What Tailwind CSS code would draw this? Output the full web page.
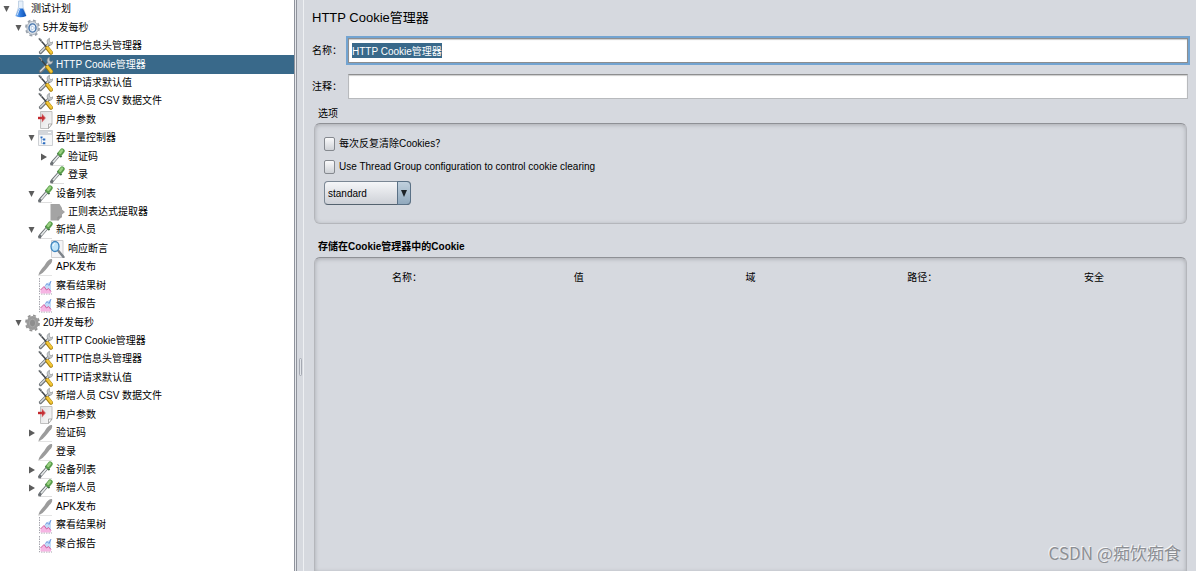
<!DOCTYPE html>
<html lang="zh-CN">
<head>
  <meta charset="UTF-8">
  <meta name="viewport" content="width=device-width, initial-scale=1.0">
  <title>HTTP Cookie管理器</title>
  <script src="https://cdn.jsdelivr.net/npm/@tailwindcss/browser@4"></script>
</head>
<body class="bg-white h-screen pr-px pb-px overflow-hidden text-black text-[10px] font-['Liberation_Sans','Noto_Sans_CJK_SC',sans-serif]">

  <!-- Icons -->
  <svg class="absolute w-0 h-0">
    <defs>
      <linearGradient id="glass" x1="0" y1="0" x2="1" y2="0">
        <stop offset="0" stop-color="#8fbcf0"/><stop offset=".45" stop-color="#2d7be0"/><stop offset="1" stop-color="#0d4eb0"/>
      </linearGradient>
      <linearGradient id="paper" x1="0" y1="0" x2="1" y2="1">
        <stop offset="0" stop-color="#dededf"/><stop offset="1" stop-color="#fbfbfb"/>
      </linearGradient>
    </defs>
    <symbol id="open" viewBox="0 0 12 18"><path d="M2.500 6h6L5.500 12z" fill="#5c5c5c"/></symbol>
    <symbol id="closed" viewBox="0 0 12 18"><path d="M3 5.500v7L9 9z" fill="#5c5c5c"/></symbol>
    <symbol id="flask" viewBox="0 0 15 18">
      <path d="M5.500 1v6L3 15.500h10L10 7V1z" fill="#e6f0fb" stroke="#b4c8de" stroke-width=".8"/>
      <path d="M6 8.500h4L13.300 16q-5.800 2.500-11 0z" fill="url(#glass)"/>
      <path d="m6.500 9-2.300 6" stroke="#cfe3fa" stroke-width="1"/>
    </symbol>
    <symbol id="gear" viewBox="0 0 15 18">
      <ellipse cx="7.500" cy="9" rx="6.500" ry="7.700" fill="none" stroke="#98a0aa" stroke-width="1.800" stroke-dasharray="3 2.600"/>
      <ellipse cx="7.500" cy="9" rx="5.600" ry="6.600" fill="#d9dfe6" stroke="#a8b0ba"/>
      <ellipse cx="7.500" cy="9" rx="3.500" ry="4.100" fill="#eef4fc" stroke="#4474ac" stroke-width="1.400"/>
      <path d="M6.300 6.800v4.400L9.800 9z" fill="#fff" stroke="#84a9d3" stroke-width=".5"/>
    </symbol>
    <symbol id="gear-off" viewBox="0 0 15 18">
      <ellipse cx="7.500" cy="9" rx="6.500" ry="7.700" fill="none" stroke="#949494" stroke-width="1.800" stroke-dasharray="3 2.600"/>
      <ellipse cx="7.500" cy="9" rx="6" ry="7" fill="#9b9b9b"/>
      <ellipse cx="7.500" cy="9" rx="3.200" ry="3.800" fill="#8e8e8e" stroke="#a9a9a9"/>
    </symbol>
    <symbol id="tools" viewBox="0 0 15 18">
      <path d="M11 7 2.500 15.500" stroke="#70757a" stroke-width="3.200" stroke-linecap="round"/>
      <path d="M11 6.700 2.600 15" stroke="#d3d7da" stroke-width="1.500" stroke-linecap="round"/>
      <path d="M11.500 1.200c-2 .8-3 2.800-2 5l2 2c2 .3 3.200-1 3.200-3.400l-1.900 1.200-1.500-2z" fill="#c8ccd0" stroke="#85898d" stroke-width=".6"/>
      <path d="M1 1.500 8.500 10" stroke="#3e4246" stroke-width="1.500"/>
      <path d="m.8 1.300 2.300 1.400.6 2.500" stroke="#8a8f93" stroke-width="1.100" fill="none"/>
      <path d="m9.300 11 3.700 4.700" stroke="#a37c0c" stroke-width="4" stroke-linecap="round"/>
      <path d="m9.500 10.700 3.700 4.700" stroke="#f2c637" stroke-width="2.600" stroke-linecap="round"/>
    </symbol>
    <symbol id="params" viewBox="0 0 15 18">
      <path d="M2.500.5h11.500v12.500l-3.500 4.500h-8z" fill="url(#paper)" stroke="#c0c0c0"/>
      <path d="M14 13h-3.500v4.500z" fill="#fff" stroke="#9a9a9a" stroke-width=".8"/>
      <path d="M0 7h5" stroke="#c3282d" stroke-width="2.400"/>
      <path d="M3.800 2.500v9l4-4.500z" fill="#d15a5e"/>
      <path d="M4.200 4.500v5L6.500 7z" fill="#c3282d"/>
    </symbol>
    <symbol id="controller" viewBox="0 0 15 18">
      <path d="M.5 1.500h14v15H.5z" fill="#f6f7f8" stroke="#cdd0d4"/>
      <path d="M1 2h13v4H1z" fill="#d3d6db"/>
      <path d="M10 3.500h3" stroke="#fff"/>
      <path d="M3.500 8v6.500h2M3.500 10.500h2" stroke="#a9c3e4" fill="none"/>
      <path d="M2.500 7.500h2v1.800h-2zM5 9.500h2.300v2H5zM5 13.300h2.300v2H5z" fill="#2b6cc0"/>
    </symbol>
    <symbol id="dropper" viewBox="0 0 15 18">
      <path d="M0 17.500h14" stroke="#dedede"/>
      <path d="m9.500 6.500-7 8-1.500 2.500" stroke="#6c7175" stroke-width="3.200" fill="none"/>
      <path d="m9 7.200-6 7" stroke="#e6eaea" stroke-width="1.700"/>
      <path d="m7.500 5 4 4" stroke="#35663a" stroke-width="1.800"/>
      <path d="m10.200 5.500 2-2.600" stroke="#5a9f4c" stroke-width="5" stroke-linecap="round"/>
      <path d="m10.200 4.700 1.700-2.200" stroke="#9ad182" stroke-width="2.400" stroke-linecap="round"/>
    </symbol>
    <symbol id="dropper-off" viewBox="0 0 15 18">
      <path d="M0 17.500h14" stroke="#e4e4e4"/>
      <path d="M.5 17c.5-3 2.500-5.500 6-9.500L8 5c1.500-2.500 4-4.500 6-4 .8 2-.5 4.500-2.500 6l-1.500 2C6 14 3.500 16.500.5 17z" fill="#9c9c9c"/>
    </symbol>
    <symbol id="extractor" viewBox="0 0 15 18">
      <path d="M.5 1h9l2.500 4v1.500l3 2.500-3 2.500v2L8.500 17.500h-8z" fill="#a4a4a4"/>
      <path d="M8 17.500v-3.500h4" stroke="#8b8b8b" stroke-width=".7" fill="none"/>
    </symbol>
    <symbol id="assertion" viewBox="0 0 15 18">
      <path d="M1.500.5h11.500v17H1.500z" fill="#f4f4f6" stroke="#cfcfd1"/>
      <path d="m8.500 11 5 6" stroke="#7c838a" stroke-width="2.400" stroke-linecap="round"/>
      <ellipse cx="5" cy="6.500" rx="4" ry="5" fill="#c0e5fa" stroke="#3f85be" stroke-width="1.300"/>
      <path d="M3 6c.3-1.500 1-2.300 2-2.500" stroke="#fff" fill="none"/>
    </symbol>
    <symbol id="chart" viewBox="0 0 15 18">
      <path d="M1.500 1v16H14" stroke="#a5a5ad" stroke-dasharray="1.500 1" fill="none"/>
      <path d="m6.500 9 3-3L13 4.500V15H7z" fill="#c3dcf8"/>
      <path d="m7.500 8.500 1.500-2 2 2 2-4.500" stroke="#6d98de" fill="none"/>
      <path d="M2.500 16.500V13L6 9.500 8.500 13l2-1.500L13 14.500v2z" fill="#f6b5e3"/>
      <path d="M2.500 13 6 9.500 8.500 13l2-1.500L13 14.500" stroke="#cf5f9d" fill="none"/>
    </symbol>
  </svg>

  <div class="flex h-full">
    <!-- Test plan tree -->
    <nav class="w-[294px] shrink-0 bg-white overflow-hidden" aria-label="测试计划">
      <ul class="grid auto-rows-fr h-[553px] whitespace-nowrap leading-4">
        <li class="flex items-center pl-px"><svg class="w-3 h-[18px]"><use href="#open"/></svg><svg class="w-[15px] h-[18px] mr-[3px]"><use href="#flask"/></svg>测试计划</li>
        <li class="flex items-center pl-[13px]"><svg class="w-3 h-[18px]"><use href="#open"/></svg><svg class="w-[15px] h-[18px] mr-[3px]"><use href="#gear"/></svg>5并发每秒</li>
        <li class="flex items-center pl-[38px]"><svg class="w-[15px] h-[18px] mr-[3px]"><use href="#tools"/></svg>HTTP信息头管理器</li>
        <li class="flex items-center pl-[38px] bg-[#39698a] text-white"><svg class="w-[15px] h-[18px] mr-[3px]"><use href="#tools"/></svg>HTTP Cookie管理器</li>
        <li class="flex items-center pl-[38px]"><svg class="w-[15px] h-[18px] mr-[3px]"><use href="#tools"/></svg>HTTP请求默认值</li>
        <li class="flex items-center pl-[38px]"><svg class="w-[15px] h-[18px] mr-[3px]"><use href="#tools"/></svg>新增人员 CSV 数据文件</li>
        <li class="flex items-center pl-[38px]"><svg class="w-[15px] h-[18px] mr-[3px]"><use href="#params"/></svg>用户参数</li>
        <li class="flex items-center pl-[26px]"><svg class="w-3 h-[18px]"><use href="#open"/></svg><svg class="w-[15px] h-[18px] mr-[3px]"><use href="#controller"/></svg>吞吐量控制器</li>
        <li class="flex items-center pl-[38px]"><svg class="w-3 h-[18px]"><use href="#closed"/></svg><svg class="w-[15px] h-[18px] mr-[3px]"><use href="#dropper"/></svg>验证码</li>
        <li class="flex items-center pl-[50px]"><svg class="w-[15px] h-[18px] mr-[3px]"><use href="#dropper"/></svg>登录</li>
        <li class="flex items-center pl-[26px]"><svg class="w-3 h-[18px]"><use href="#open"/></svg><svg class="w-[15px] h-[18px] mr-[3px]"><use href="#dropper"/></svg>设备列表</li>
        <li class="flex items-center pl-[50px]"><svg class="w-[15px] h-[18px] mr-[3px]"><use href="#extractor"/></svg>正则表达式提取器</li>
        <li class="flex items-center pl-[26px]"><svg class="w-3 h-[18px]"><use href="#open"/></svg><svg class="w-[15px] h-[18px] mr-[3px]"><use href="#dropper"/></svg>新增人员</li>
        <li class="flex items-center pl-[50px]"><svg class="w-[15px] h-[18px] mr-[3px]"><use href="#assertion"/></svg>响应断言</li>
        <li class="flex items-center pl-[38px]"><svg class="w-[15px] h-[18px] mr-[3px]"><use href="#dropper-off"/></svg>APK发布</li>
        <li class="flex items-center pl-[38px]"><svg class="w-[15px] h-[18px] mr-[3px]"><use href="#chart"/></svg>察看结果树</li>
        <li class="flex items-center pl-[38px]"><svg class="w-[15px] h-[18px] mr-[3px]"><use href="#chart"/></svg>聚合报告</li>
        <li class="flex items-center pl-[13px]"><svg class="w-3 h-[18px]"><use href="#open"/></svg><svg class="w-[15px] h-[18px] mr-[3px]"><use href="#gear-off"/></svg>20并发每秒</li>
        <li class="flex items-center pl-[38px]"><svg class="w-[15px] h-[18px] mr-[3px]"><use href="#tools"/></svg>HTTP Cookie管理器</li>
        <li class="flex items-center pl-[38px]"><svg class="w-[15px] h-[18px] mr-[3px]"><use href="#tools"/></svg>HTTP信息头管理器</li>
        <li class="flex items-center pl-[38px]"><svg class="w-[15px] h-[18px] mr-[3px]"><use href="#tools"/></svg>HTTP请求默认值</li>
        <li class="flex items-center pl-[38px]"><svg class="w-[15px] h-[18px] mr-[3px]"><use href="#tools"/></svg>新增人员 CSV 数据文件</li>
        <li class="flex items-center pl-[38px]"><svg class="w-[15px] h-[18px] mr-[3px]"><use href="#params"/></svg>用户参数</li>
        <li class="flex items-center pl-[26px]"><svg class="w-3 h-[18px]"><use href="#closed"/></svg><svg class="w-[15px] h-[18px] mr-[3px]"><use href="#dropper-off"/></svg>验证码</li>
        <li class="flex items-center pl-[38px]"><svg class="w-[15px] h-[18px] mr-[3px]"><use href="#dropper-off"/></svg>登录</li>
        <li class="flex items-center pl-[26px]"><svg class="w-3 h-[18px]"><use href="#closed"/></svg><svg class="w-[15px] h-[18px] mr-[3px]"><use href="#dropper"/></svg>设备列表</li>
        <li class="flex items-center pl-[26px]"><svg class="w-3 h-[18px]"><use href="#closed"/></svg><svg class="w-[15px] h-[18px] mr-[3px]"><use href="#dropper"/></svg>新增人员</li>
        <li class="flex items-center pl-[38px]"><svg class="w-[15px] h-[18px] mr-[3px]"><use href="#dropper-off"/></svg>APK发布</li>
        <li class="flex items-center pl-[38px]"><svg class="w-[15px] h-[18px] mr-[3px]"><use href="#chart"/></svg>察看结果树</li>
        <li class="flex items-center pl-[38px]"><svg class="w-[15px] h-[18px] mr-[3px]"><use href="#chart"/></svg>聚合报告</li>
      </ul>
    </nav>

    <!-- Splitter -->
    <div class="w-[10px] shrink-0 bg-[#d6d9df] border-l border-[#8f939c] border-r border-r-[#eef0f3] flex">
      <div class="w-[2px] bg-[#e6e8ec] border-r border-[#8f939c]"></div>
      <div class="w-[3px] h-[18px] ml-[2px] mt-[358px] rounded-xs border border-[#a5a9b2] bg-[#e2e5ea]"></div>
    </div>

    <!-- Cookie manager -->
    <main class="relative flex-1 min-w-0 bg-[#d6d9df] flex flex-col pl-2 pr-[7px] overflow-hidden">
      <h1 class="h-9 leading-9 text-[13px]">HTTP Cookie管理器</h1>

      <div class="flex items-center h-7 pr-px">
        <label for="name" class="w-9">名称：</label>
        <input id="name" type="text" value="HTTP Cookie管理器" class="flex-1 h-[25px] px-[3px] bg-white border border-[#8d8e8f] outline-2 outline-[#73a4d1] shadow-[inset_0_1px_1px_#ccc] selection:bg-[#39698a] selection:text-white">
      </div>

      <div class="flex items-center h-7 mt-2 pr-px">
        <label for="comment" class="w-9">注释：</label>
        <input id="comment" type="text" class="flex-1 h-[25px] px-[3px] bg-white border border-[#b8babd] border-t-[#8d8e8f] outline-none shadow-[inset_0_1px_1px_#ccc]">
      </div>

      <section class="mx-[2px] mt-1">
        <h2 class="h-[19px] pl-1 leading-[19px]">选项</h2>
        <div class="flex flex-col items-start h-[101px] pt-2 pl-[9px] rounded-md border border-[#b4b6bb] border-t-[#8e9095] shadow-[inset_0_1px_4px_#a9abb0]">
          <label class="flex items-center h-[23px] gap-1">
            <input type="checkbox" class="appearance-none w-[11px] h-[14px] rounded-xs border border-[#85898f] bg-linear-to-b from-[#fafafb] to-[#cfd2d7]">
            每次反复清除Cookies？
          </label>
          <label class="flex items-center h-[23px] gap-1">
            <input type="checkbox" class="appearance-none w-[11px] h-[14px] rounded-xs border border-[#85898f] bg-linear-to-b from-[#fafafb] to-[#cfd2d7]">
            Use Thread Group configuration to control cookie clearing
          </label>
          <div class="relative mt-[3px]">
            <select aria-label="standard" class="appearance-none w-[87px] h-6 pl-[3px] rounded-sm border border-[#7b8794] border-b-[#54626f] bg-linear-to-b from-[#f5f6f8] to-[#ced1d7] outline-none">
              <option>standard</option>
            </select>
            <span class="absolute right-0 top-0 w-[14px] h-6 flex items-center justify-center rounded-r-sm border border-[#5a7186] bg-linear-to-b from-[#c0d0dd] to-[#91a9bd] pointer-events-none">
              <svg class="w-[6px] h-[7px]" viewBox="0 0 6 7"><path d="M0 0h6L3 7z" fill="#1d2327"/></svg>
            </span>
          </div>
        </div>
      </section>

      <section class="flex-1 flex flex-col mx-[2px] mt-[13px]">
        <h2 class="h-5 pl-1 leading-5 font-bold">存储在Cookie管理器中的Cookie</h2>
        <div class="flex-1 px-[6px] pt-[9px] rounded-t-md border border-b-0 border-[#b4b6bb] border-t-[#8e9095] shadow-[inset_0_1px_4px_#a9abb0]">
          <table class="w-full table-fixed">
            <thead>
              <tr class="h-5">
                <th class="font-normal">名称：</th>
                <th class="font-normal">值</th>
                <th class="font-normal">域</th>
                <th class="font-normal">路径：</th>
                <th class="font-normal">安全</th>
              </tr>
            </thead>
          </table>
        </div>
      </section>

      <p class="absolute right-[15px] bottom-[6px] text-[17px] leading-6 text-[#8d8f94] font-['Noto_Sans_CJK_SC',sans-serif] [text-shadow:-1px_-1px_0_#f4f5f7]">CSDN @痴饮痴食</p>
    </main>
  </div>

  <script>
    const nameField = document.getElementById('name');
    nameField.focus();
    nameField.select();
  </script>
</body>
</html>
